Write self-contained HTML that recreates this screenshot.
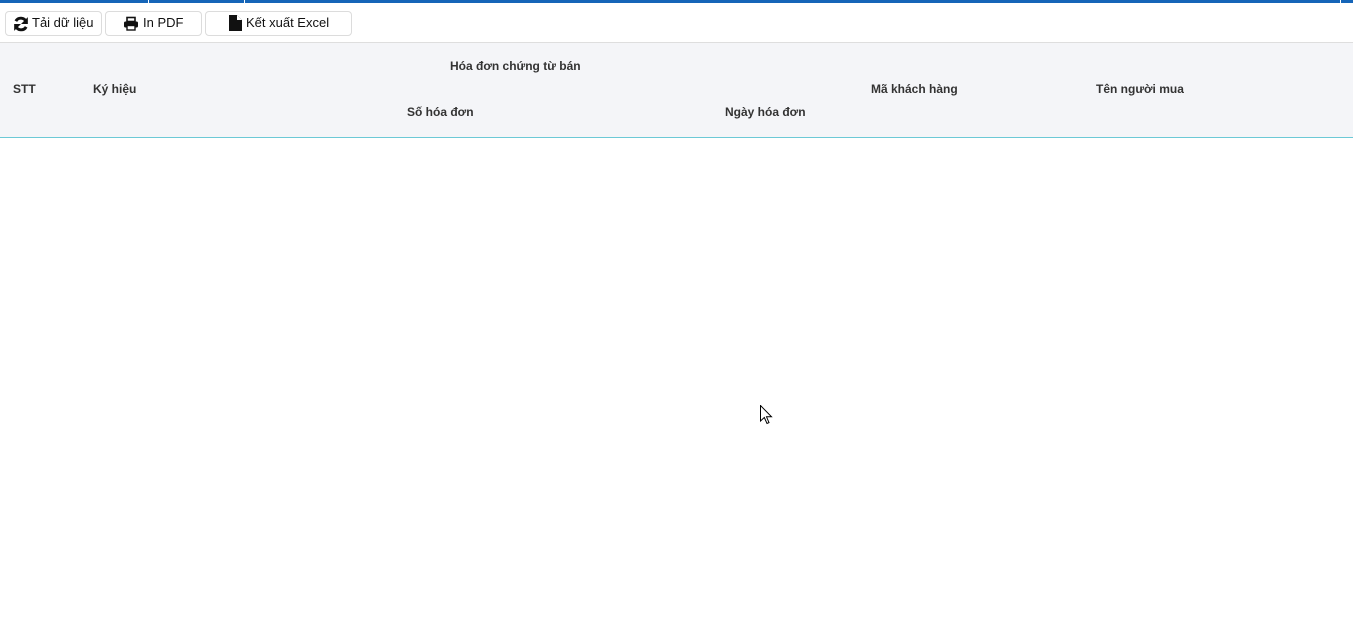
<!DOCTYPE html>
<html><head><meta charset="utf-8"><style>
body{margin:0;width:1353px;height:638px;background:#fff;font-family:"Liberation Sans",sans-serif;position:relative;overflow:hidden}
.bar{position:absolute;top:0;left:0;width:1353px;height:3px;background:#1565b8}
.sep{position:absolute;top:0;width:1px;height:3px;background:#fff}
.btn{position:absolute;top:11px;height:23px;border:1px solid #dcdcdc;border-radius:4px;background:#fff;font-size:13px;color:#111;line-height:22px;box-sizing:content-box}
.btn svg{position:absolute;top:4px}
.btn span{position:absolute;top:0}
.head{position:absolute;top:42px;left:0;width:1353px;height:94px;background:#f4f5f8;border-top:1px solid #dedede;border-bottom:1px solid #6cc9d6}
.t{position:absolute;font-size:12px;font-weight:bold;color:#333;white-space:nowrap}
</style></head><body>
<div class="bar"></div>
<div class="sep" style="left:148px"></div><div class="sep" style="left:244px"></div><div class="sep" style="left:1340px"></div>
<div class="btn" style="left:5px;width:95px">
<svg style="left:7px" width="16" height="16" viewBox="0 0 14 14"><path d="M11.5 5A5 5 0 0 0 2.5 4.5" fill="none" stroke="#111" stroke-width="2.6"/><path d="M13 1V7H7Z" fill="#111"/><path d="M2.5 9A5 5 0 0 0 11.5 9.5" fill="none" stroke="#111" stroke-width="2.6"/><path d="M1 13V7H7Z" fill="#111"/></svg>
<span style="left:26px">Tải dữ liệu</span></div>
<div class="btn" style="left:105px;width:95px">
<svg style="left:17px" width="16" height="15" viewBox="0 0 16 14"><rect x="4" y="1" width="8" height="4" fill="none" stroke="#111" stroke-width="1.6"/><rect x="1" y="5" width="14" height="6" rx="1.5" fill="#111"/><rect x="4" y="9" width="8" height="4.5" fill="#fff" stroke="#111" stroke-width="1.4"/></svg>
<span style="left:37px">In PDF</span></div>
<div class="btn" style="left:205px;width:145px">
<svg style="left:22px;top:3px" width="14" height="16" viewBox="0 0 14 16"><path d="M1 0H9L14 5V16H1Z" fill="#111"/><path d="M9 0V5H14" fill="#fff"/></svg>
<span style="left:40px">Kết xuất Excel</span></div>
<div class="head">
<div class="t" style="left:13px;top:39px">STT</div>
<div class="t" style="left:93px;top:39px">Ký hiệu</div>
<div class="t" style="left:450px;top:16px">Hóa đơn chứng từ bán</div>
<div class="t" style="left:407px;top:62px">Số hóa đơn</div>
<div class="t" style="left:725px;top:62px">Ngày hóa đơn</div>
<div class="t" style="left:871px;top:39px">Mã khách hàng</div>
<div class="t" style="left:1096px;top:39px">Tên người mua</div>
</div>
<svg style="position:absolute;left:760px;top:405px" width="13" height="20" viewBox="0 0 13 20"><path d="M0.5 0.5V16L4.3 12.5L7 18.5L9 17.6L6.5 11.8H11.5Z" fill="#fff" stroke="#000" stroke-width="1"/></svg>
</body></html>
